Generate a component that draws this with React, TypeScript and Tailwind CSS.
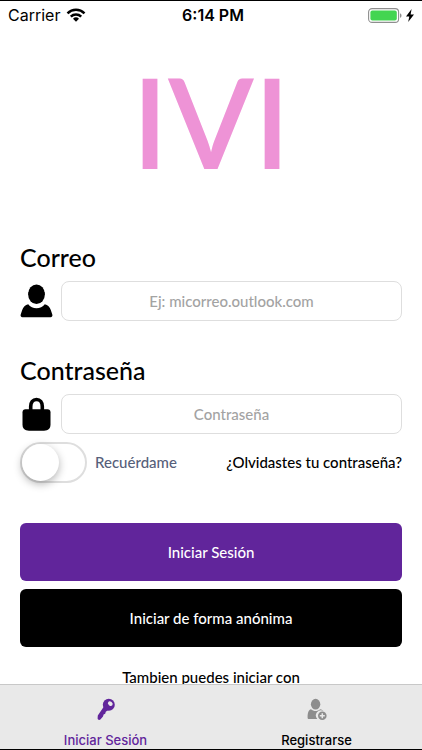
import { useState } from "react";

export default function App() {
  let [tab, setTab] = useState("login");

  return (
    <div className="flex h-screen flex-col border-y border-black bg-white font-['Lato',sans-serif] font-medium text-black">
      <StatusBar />

      <main className="min-h-0 flex-1 overflow-y-auto px-5 [scrollbar-width:none]">
        <h1 className="mt-8 mb-[60px] text-center text-[125px] leading-[120px] font-semibold text-[#ee93d6]">
          IVI
        </h1>

        <form onSubmit={(e) => e.preventDefault()}>
          <label htmlFor="email" className="block text-[25px] leading-8">
            Correo
          </label>
          <div className="mt-2 flex items-center gap-2">
            <PersonIcon />
            <input
              id="email"
              type="email"
              placeholder="Ej: micorreo.outlook.com"
              className="h-10 min-w-0 flex-1 rounded-lg border border-[#dedede] text-center text-[15px] placeholder:text-[#a3a3a3]"
            />
          </div>

          <label
            htmlFor="password"
            className="mt-[33px] block text-[25px] leading-8"
          >
            Contraseña
          </label>
          <div className="mt-2 flex items-center gap-2">
            <LockIcon />
            <input
              id="password"
              type="password"
              placeholder="Contraseña"
              className="h-10 min-w-0 flex-1 rounded-lg border border-[#dedede] text-center text-[15px] placeholder:text-[#a3a3a3]"
            />
          </div>

          <div className="mt-2 flex items-center justify-between">
            <div className="flex items-center gap-2">
              <input
                id="remember"
                type="checkbox"
                role="switch"
                className="h-[41px] w-[67px] appearance-none rounded-full border-2 border-[#dedede] before:block before:size-[37px] before:rounded-full before:bg-white before:shadow-[0_3px_8px_rgba(0,0,0,0.3)] checked:border-[#61259b] checked:bg-[#61259b] checked:before:ml-[26px]"
              />
              <label
                htmlFor="remember"
                className="text-[15px] text-[#56607a]"
              >
                Recuérdame
              </label>
            </div>
            <a href="#recuperar" className="text-[15px]">
              ¿Olvidastes tu contraseña?
            </a>
          </div>

          <button
            type="submit"
            className="mt-10 block h-[58px] w-full rounded-md bg-[#61259b] text-[15px] text-white"
          >
            Iniciar Sesión
          </button>
          <button
            type="button"
            className="mt-2 block h-[58px] w-full rounded-md bg-black text-[15px] text-white"
          >
            Iniciar de forma anónima
          </button>
        </form>

        <p className="mt-5 pb-5 text-center text-[15px] leading-5">
          Tambien puedes iniciar con
        </p>
      </main>

      <nav className="grid grid-cols-2 border-t border-[#c8c8c8] bg-[#e9e9e9] font-['Inter',sans-serif] text-[13px] leading-4">
        <button
          className={`flex flex-col items-center gap-[11px] pt-3 pb-px ${
            tab === "login" ? "text-[#61259b]" : "text-black"
          }`}
          onClick={() => setTab("login")}
        >
          <KeyIcon />
          Iniciar Sesión
        </button>
        <button
          className={`flex flex-col items-center gap-[11px] pt-3 pb-px ${
            tab === "register" ? "text-[#61259b]" : "text-black"
          }`}
          onClick={() => setTab("register")}
        >
          <AddUserIcon />
          Registrarse
        </button>
      </nav>
    </div>
  );
}

function StatusBar() {
  return (
    <header className="grid h-7 grid-cols-3 items-center px-2 font-['Inter',sans-serif] text-base">
      <div className="flex items-center gap-1.5 font-normal">
        Carrier
        <svg viewBox="0 0 20 14" className="h-[14px] w-5">
          <g fill="none" stroke="currentColor" strokeWidth="2.5">
            <path d="M1.5 5.3a12.2 12.2 0 0 1 17 0" />
            <path d="M4.8 8.6a7.5 7.5 0 0 1 10.4 0" />
          </g>
          <path d="M10 13.8 7 10.8a4.3 4.3 0 0 1 6 0z" fill="currentColor" />
        </svg>
      </div>
      <div className="pl-1 text-center font-semibold">6:14 PM</div>
      <div className="flex items-center justify-end gap-1">
        <svg viewBox="0 0 34 15" className="h-[15px] w-[34px]">
          <rect
            x="0.6"
            y="0.6"
            width="30"
            height="13.8"
            rx="3.5"
            fill="none"
            stroke="#8e8e8e"
            strokeWidth="1.1"
          />
          <rect x="2.4" y="2.4" width="26.4" height="10.2" rx="2" fill="#43d551" />
          <path d="M32 5.2c2 .8 2 3.8 0 4.6z" fill="#8e8e8e" />
        </svg>
        <svg viewBox="0 0 8 13" className="h-[13px] w-2">
          <path d="M5.6 0 0 7.4h3.3L2.2 13 8 5.4H4.6z" fill="currentColor" />
        </svg>
      </div>
    </header>
  );
}

function PersonIcon() {
  return (
    <svg viewBox="0 0 33 34" className="h-[34px] w-[33px]">
      <ellipse cx="16.5" cy="10.2" rx="8.4" ry="9.8" />
      <path d="M8.2 20.3c2 2.6 5 4 8.3 4s6.3-1.4 8.3-4c3 .8 5 2.7 6 5.7l1.5 4.6c.5 1.5-.3 2.6-1.7 2.6H2.4C1 33.200.2 32.100.7 30.600L2.200 26c1-3 3-4.900 6-5.700z" />
    </svg>
  );
}

function LockIcon() {
  return (
    <svg viewBox="0 0 33 34" className="h-[34px] w-[33px]">
      <path
        d="M10.7 14V9.5c0-4.3 2.2-7 5.8-7s5.8 2.7 5.8 7V14"
        fill="none"
        stroke="currentColor"
        strokeWidth="3.6"
      />
      <path d="M5.5 12.300h22c1.900 0 3 1.100 3 3v12.200c0 4-2.200 6.200-6.500 6.200H9c-4.300 0-6.500-2.200-6.500-6.200V15.300c0-1.900 1.100-3 3-3z" />
    </svg>
  );
}

function KeyIcon() {
  return (
    <svg viewBox="0 0 20 24" className="h-6 w-5" fill="currentColor">
      <circle cx="12.8" cy="7.8" r="6" />
      <path d="M7.6 10 1.8 18.6 1.6 21.200C1.600 22.800 3.400 23.400 4.400 22.400L7 19.400 7.600 17.400 9.200 16.800 9.800 14.800 12.200 13z" />
      <ellipse
        cx="14.3"
        cy="6.6"
        rx="2.6"
        ry="2"
        transform="rotate(40 14.3 6.6)"
        fill="#e9e9e9"
      />
    </svg>
  );
}

function AddUserIcon() {
  return (
    <svg viewBox="0 0 20 24" className="h-6 w-5" fill="#8d8d8d">
      <ellipse cx="8.6" cy="7.2" rx="4.7" ry="5.4" />
      <path d="M4 12.300c2.700 2.400 6.500 2.400 9.200 0 1.500.3 2.600.9 3.200 1.500a5.200 5.200 0 0 0-6.100 8.200H2C1 22 .6 21.500.6 20.500.7 16 1.300 13 4 12.300z" />
      <circle cx="15.3" cy="18.8" r="4.3" />
      <path d="M15.300 16.300v5M12.800 18.800h5" stroke="#e9e9e9" strokeWidth="1.5" />
    </svg>
  );
}
